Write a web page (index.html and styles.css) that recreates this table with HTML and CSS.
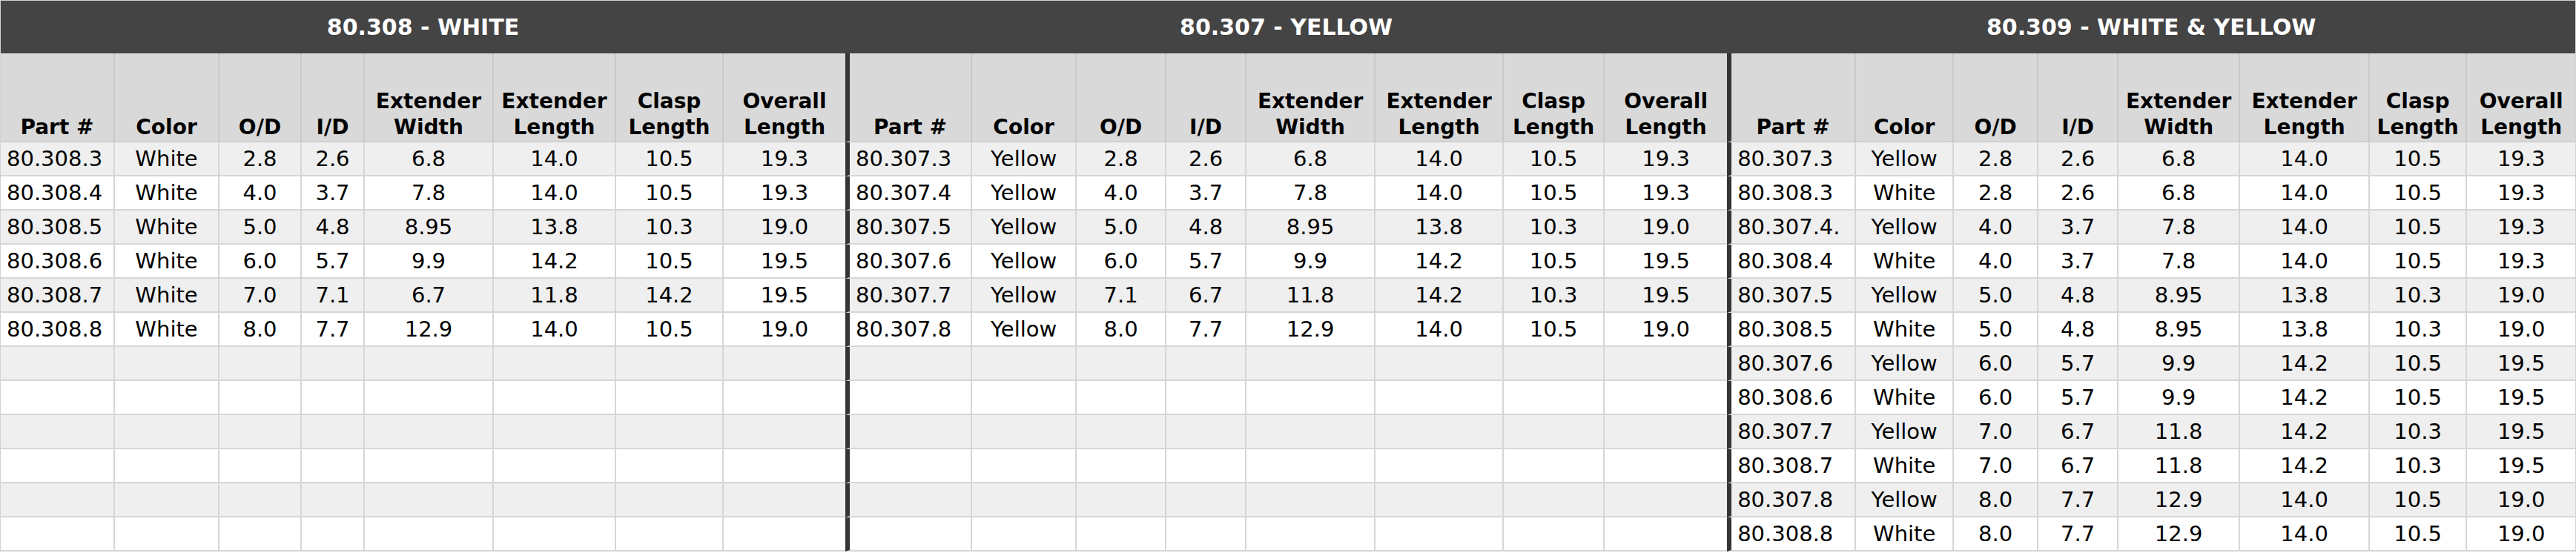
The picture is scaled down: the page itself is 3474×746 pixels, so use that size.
FILE: index.html
```html
<!DOCTYPE html>
<html lang="en">
<head>
<meta charset="utf-8">
<title>Clasp sizes</title>
<link rel="stylesheet" href="styles.css">
</head>
<body>
<table class="spec">
  <colgroup>
    <col class="w154"><col class="w141"><col class="w111"><col class="w85"><col class="w174"><col class="w165"><col class="w145"><col class="w164">
  </colgroup>
  <colgroup>
    <col class="w171"><col class="w141"><col class="w121"><col class="w108"><col class="w174"><col class="w173"><col class="w136"><col class="w165">
  </colgroup>
  <colgroup>
    <col class="w174"><col class="w132"><col class="w114"><col class="w108"><col class="w164"><col class="w175"><col class="w131"><col class="w146">
  </colgroup>
  <thead>
    <tr class="titles">
      <th colspan="8">80.308 - WHITE</th>
      <th colspan="8">80.307 - YELLOW</th>
      <th colspan="8">80.309 - WHITE &amp; YELLOW</th>
    </tr>
    <tr class="heads">
      <th>Part #</th><th>Color</th><th>O/D</th><th>I/D</th><th>Extender<br>Width</th><th>Extender<br>Length</th><th>Clasp<br>Length</th><th class="end">Overall<br>Length</th>
      <th class="start">Part #</th><th>Color</th><th>O/D</th><th>I/D</th><th>Extender<br>Width</th><th>Extender<br>Length</th><th>Clasp<br>Length</th><th class="end">Overall<br>Length</th>
      <th class="start">Part #</th><th>Color</th><th>O/D</th><th>I/D</th><th>Extender<br>Width</th><th>Extender<br>Length</th><th>Clasp<br>Length</th><th class="last">Overall<br>Length</th>
    </tr>
  </thead>
  <tbody>
    <tr>
      <td class="part">80.308.3</td><td>White</td><td>2.8</td><td>2.6</td><td>6.8</td><td>14.0</td><td>10.5</td><td class="end">19.3</td>
      <td class="part start">80.307.3</td><td>Yellow</td><td>2.8</td><td>2.6</td><td>6.8</td><td>14.0</td><td>10.5</td><td class="end">19.3</td>
      <td class="part start">80.307.3</td><td>Yellow</td><td>2.8</td><td>2.6</td><td>6.8</td><td>14.0</td><td>10.5</td><td class="last">19.3</td>
    </tr>
    <tr>
      <td class="part">80.308.4</td><td>White</td><td>4.0</td><td>3.7</td><td>7.8</td><td>14.0</td><td>10.5</td><td class="end">19.3</td>
      <td class="part start">80.307.4</td><td>Yellow</td><td>4.0</td><td>3.7</td><td>7.8</td><td>14.0</td><td>10.5</td><td class="end">19.3</td>
      <td class="part start">80.308.3</td><td>White</td><td>2.8</td><td>2.6</td><td>6.8</td><td>14.0</td><td>10.5</td><td class="last">19.3</td>
    </tr>
    <tr>
      <td class="part">80.308.5</td><td>White</td><td>5.0</td><td>4.8</td><td>8.95</td><td>13.8</td><td>10.3</td><td class="end">19.0</td>
      <td class="part start">80.307.5</td><td>Yellow</td><td>5.0</td><td>4.8</td><td>8.95</td><td>13.8</td><td>10.3</td><td class="end">19.0</td>
      <td class="part start">80.307.4.</td><td>Yellow</td><td>4.0</td><td>3.7</td><td>7.8</td><td>14.0</td><td>10.5</td><td class="last">19.3</td>
    </tr>
    <tr>
      <td class="part">80.308.6</td><td>White</td><td>6.0</td><td>5.7</td><td>9.9</td><td>14.2</td><td>10.5</td><td class="end">19.5</td>
      <td class="part start">80.307.6</td><td>Yellow</td><td>6.0</td><td>5.7</td><td>9.9</td><td>14.2</td><td>10.5</td><td class="end">19.5</td>
      <td class="part start">80.308.4</td><td>White</td><td>4.0</td><td>3.7</td><td>7.8</td><td>14.0</td><td>10.5</td><td class="last">19.3</td>
    </tr>
    <tr>
      <td class="part">80.308.7</td><td>White</td><td>7.0</td><td>7.1</td><td>6.7</td><td>11.8</td><td>14.2</td><td class="end plain">19.5</td>
      <td class="part start">80.307.7</td><td>Yellow</td><td>7.1</td><td>6.7</td><td>11.8</td><td>14.2</td><td>10.3</td><td class="end">19.5</td>
      <td class="part start">80.307.5</td><td>Yellow</td><td>5.0</td><td>4.8</td><td>8.95</td><td>13.8</td><td>10.3</td><td class="last">19.0</td>
    </tr>
    <tr>
      <td class="part">80.308.8</td><td>White</td><td>8.0</td><td>7.7</td><td>12.9</td><td>14.0</td><td>10.5</td><td class="end">19.0</td>
      <td class="part start">80.307.8</td><td>Yellow</td><td>8.0</td><td>7.7</td><td>12.9</td><td>14.0</td><td>10.5</td><td class="end">19.0</td>
      <td class="part start">80.308.5</td><td>White</td><td>5.0</td><td>4.8</td><td>8.95</td><td>13.8</td><td>10.3</td><td class="last">19.0</td>
    </tr>
    <tr>
      <td class="part"></td><td></td><td></td><td></td><td></td><td></td><td></td><td class="end"></td>
      <td class="part start"></td><td></td><td></td><td></td><td></td><td></td><td></td><td class="end"></td>
      <td class="part start">80.307.6</td><td>Yellow</td><td>6.0</td><td>5.7</td><td>9.9</td><td>14.2</td><td>10.5</td><td class="last">19.5</td>
    </tr>
    <tr>
      <td class="part"></td><td></td><td></td><td></td><td></td><td></td><td></td><td class="end"></td>
      <td class="part start"></td><td></td><td></td><td></td><td></td><td></td><td></td><td class="end"></td>
      <td class="part start">80.308.6</td><td>White</td><td>6.0</td><td>5.7</td><td>9.9</td><td>14.2</td><td>10.5</td><td class="last">19.5</td>
    </tr>
    <tr>
      <td class="part"></td><td></td><td></td><td></td><td></td><td></td><td></td><td class="end"></td>
      <td class="part start"></td><td></td><td></td><td></td><td></td><td></td><td></td><td class="end"></td>
      <td class="part start">80.307.7</td><td>Yellow</td><td>7.0</td><td>6.7</td><td>11.8</td><td>14.2</td><td>10.3</td><td class="last">19.5</td>
    </tr>
    <tr>
      <td class="part"></td><td></td><td></td><td></td><td></td><td></td><td></td><td class="end"></td>
      <td class="part start"></td><td></td><td></td><td></td><td></td><td></td><td></td><td class="end"></td>
      <td class="part start">80.308.7</td><td>White</td><td>7.0</td><td>6.7</td><td>11.8</td><td>14.2</td><td>10.3</td><td class="last">19.5</td>
    </tr>
    <tr>
      <td class="part"></td><td></td><td></td><td></td><td></td><td></td><td></td><td class="end"></td>
      <td class="part start"></td><td></td><td></td><td></td><td></td><td></td><td></td><td class="end"></td>
      <td class="part start">80.307.8</td><td>Yellow</td><td>8.0</td><td>7.7</td><td>12.9</td><td>14.0</td><td>10.5</td><td class="last">19.0</td>
    </tr>
    <tr>
      <td class="part"></td><td></td><td></td><td></td><td></td><td></td><td></td><td class="end"></td>
      <td class="part start"></td><td></td><td></td><td></td><td></td><td></td><td></td><td class="end"></td>
      <td class="part start">80.308.8</td><td>White</td><td>8.0</td><td>7.7</td><td>12.9</td><td>14.0</td><td>10.5</td><td class="last">19.0</td>
    </tr>
  </tbody>
</table>
</body>
</html>
```
FILE: styles.css
```css
html, body {
  margin: 0;
  padding: 0;
  background: #ffffff;
}

.spec {
  width: 3474px;
  table-layout: fixed;
  border-collapse: separate;
  border-spacing: 0;
  border: 1px solid #d2d2d2;
  border-bottom: none;
  font-family: "DejaVu Sans", Verdana, sans-serif;
  font-size: 29px;
  color: #000;
}

.w85 { width: 85px; }
.w108 { width: 108px; }
.w111 { width: 111px; }
.w114 { width: 114px; }
.w121 { width: 121px; }
.w131 { width: 131px; }
.w132 { width: 132px; }
.w136 { width: 136px; }
.w141 { width: 141px; }
.w145 { width: 145px; }
.w146 { width: 146px; }
.w154 { width: 154px; }
.w164 { width: 164px; }
.w165 { width: 165px; }
.w171 { width: 171px; }
.w173 { width: 173px; }
.w174 { width: 174px; }
.w175 { width: 175px; }

.spec th,
.spec td {
  box-sizing: border-box;
  padding: 0;
  text-align: center;
  white-space: nowrap;
  overflow: hidden;
}

.titles th {
  background: #444444;
  color: #ffffff;
  font-weight: bold;
  font-size: 30px;
  line-height: 71px;
}

.heads th {
  background: #d9d9d9;
  font-weight: bold;
  font-size: 28px;
  line-height: 35px;
  padding: 47px 0 1px;
  vertical-align: bottom;
  border-right: 2px solid #c9c9c9;
  border-bottom: 2px solid #cfcfcf;
}

.spec td {
  line-height: 34px;
  padding: 5px 0;
  border-right: 2px solid #d6d6d6;
  border-bottom: 2px solid #d6d6d6;
}

.spec tbody tr:nth-child(odd) td {
  background: #efefef;
}

.spec tbody tr:nth-child(odd) td.plain {
  background: #ffffff;
}

.spec td.part {
  text-align: left;
  padding-left: 8px;
}

.spec .end,
.spec .last {
  border-right: none;
}

.spec .start {
  border-left: 6px solid #353535;
}
```
